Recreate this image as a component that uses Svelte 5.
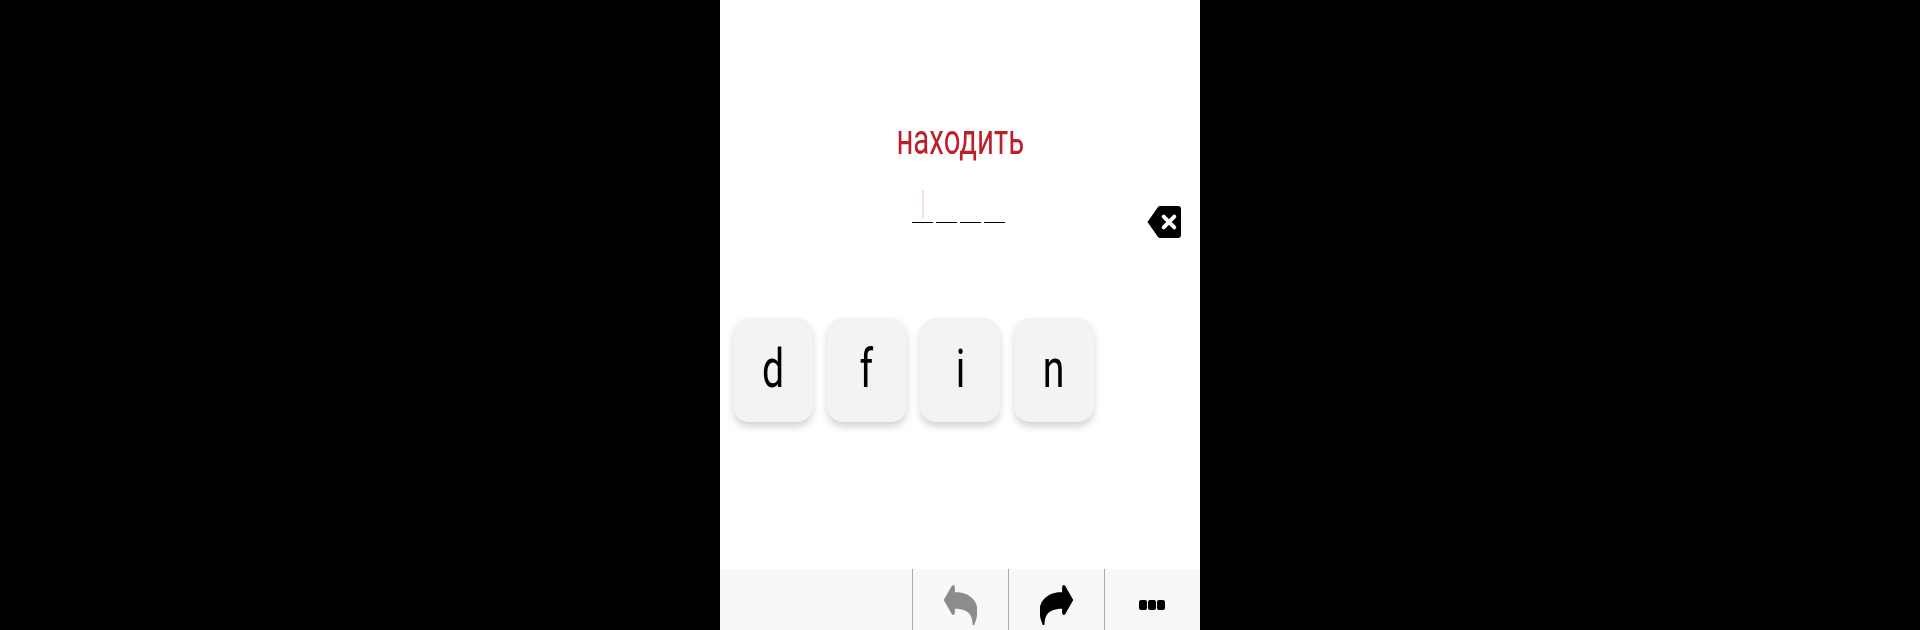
<script>
  const letters = ['d', 'f', 'i', 'n'];
  const slots = [0, 1, 2, 3];
  const arrow = 'M0.8 15 L8.5 1.5 Q10 0 10 3 L10 8 C24 8 32.5 15 32.5 26 C32.5 31 31 36 29.5 39.5 C29 30 27 23.5 10 22.5 L10 27 Q10 30 8.5 28.5 Z';
</script>

<div class="phone">
  <div class="word"><span>находить</span></div>

  <div class="answer">
    <div class="slots">
      {#each slots as slot}
        <div class="slot">
          {#if slot === 0}<i class="caret"></i>{/if}
        </div>
      {/each}
    </div>
    <svg class="backspace" viewBox="0 0 34 32" width="34" height="32">
      <path d="M0.5 16 L11 1 Q11.7 0 13 0 L31 0 Q34 0 34 3 L34 29 Q34 32 31 32 L13 32 Q11.7 32 11 31 Z" fill="#000" />
      <path d="M16.7 10.7 L27.3 21.3 M27.3 10.7 L16.7 21.3" stroke="#fff" stroke-width="4" stroke-linecap="round" />
    </svg>
  </div>

  <div class="keys">
    {#each letters as letter}
      <button class="key" type="button"><span>{letter}</span></button>
    {/each}
  </div>

  <div class="toolbar">
    <button class="tool" type="button">
      <svg viewBox="0 0 33 40" width="33" height="40"><path d={arrow} fill="#8c8c8c" stroke="#8c8c8c" stroke-width="1.8" stroke-linejoin="round" /></svg>
    </button>
    <button class="tool" type="button">
      <svg class="flip" viewBox="0 0 33 40" width="33" height="40"><path d={arrow} fill="#000" stroke="#000" stroke-width="1.8" stroke-linejoin="round" /></svg>
    </button>
    <button class="tool" type="button">
      <div class="dots"><b></b><b></b><b></b></div>
    </button>
  </div>
</div>

<style>
  :global(body) {
    margin: 0;
    background: #000;
  }

  .phone {
    display: flex;
    flex-direction: column;
    width: 480px;
    height: 630px;
    margin: 0 auto;
    overflow: hidden;
    background: #fff;
    font-family: Roboto, "Noto Sans", sans-serif;
  }

  .word {
    margin-top: 116px;
    text-align: center;
    font-size: 42px;
    line-height: 48px;
    color: #bd1f29;
    filter: blur(0.3px);
  }

  .word span {
    display: inline-block;
    transform: scaleX(0.7);
  }

  .answer {
    display: flex;
    height: 48px;
    margin-top: 26px;
    padding: 0 19px 0 192px;
    filter: blur(0.3px);
  }

  .slots {
    display: flex;
    gap: 3px;
  }

  .slot {
    display: flex;
    justify-content: center;
    width: 21px;
    height: 32px;
    border-bottom: 1px solid #000;
  }

  .caret {
    width: 2px;
    height: 28px;
    background: #f1dfe1;
  }

  .backspace {
    align-self: flex-end;
    margin-left: auto;
  }

  .keys {
    display: flex;
    gap: 13.5px;
    margin-top: 80px;
    padding-left: 13px;
  }

  .key {
    display: flex;
    align-items: center;
    justify-content: center;
    width: 80px;
    height: 104px;
    padding: 0 0 3px;
    border: none;
    border-radius: 16px;
    background: #f3f3f3;
    box-shadow: 0 5px 8px -1px rgba(0, 0, 0, 0.2);
    color: #000;
    font-family: inherit;
    font-size: 53px;
  }

  .key span {
    display: block;
    transform: scaleX(0.74);
    filter: blur(0.3px);
  }

  .toolbar {
    display: flex;
    justify-content: flex-end;
    height: 61px;
    margin-top: auto;
    background: #f8f8f8;
  }

  .tool {
    display: flex;
    justify-content: center;
    width: 96px;
    padding: 16px 0 0;
    border: none;
    border-left: 1px solid #aaa;
    background: none;
  }

  .tool svg {
    filter: blur(0.4px);
  }

  .flip {
    transform: scaleX(-1);
  }

  .dots {
    display: flex;
    gap: 1px;
    margin: 15px 1px 0 0;
  }

  .dots b {
    width: 8px;
    height: 10px;
    border-radius: 2px;
    background: #000;
  }
</style>
